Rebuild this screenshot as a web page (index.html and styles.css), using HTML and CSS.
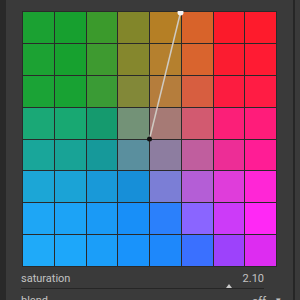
FILE: index.html
```html
<!DOCTYPE html>
<html>
<head>
<meta charset="utf-8">
<link rel="stylesheet" href="styles.css">
</head>
<body>
<div class="edge"></div>
<div class="panel">
  <div class="area">
    <div class="grid">
      <div style="background:#1ba132"></div><div style="background:#17a02f"></div><div style="background:#3b9a2c"></div><div style="background:#82862a"></div><div style="background:#b57f25"></div><div style="background:#d8632a"></div><div style="background:#fb1a2a"></div><div style="background:#fe1b2c"></div>
      <div style="background:#1ca233"></div><div style="background:#17a12f"></div><div style="background:#3e9a30"></div><div style="background:#85872d"></div><div style="background:#b5802e"></div><div style="background:#d9642e"></div><div style="background:#fb1c30"></div><div style="background:#ff1b33"></div>
      <div style="background:#1ba336"></div><div style="background:#18a233"></div><div style="background:#3a9b35"></div><div style="background:#828838"></div><div style="background:#b57d3c"></div><div style="background:#d75e40"></div><div style="background:#fc1c40"></div><div style="background:#ff1c44"></div>
      <div style="background:#1aa876"></div><div style="background:#18a872"></div><div style="background:#159a6e"></div><div style="background:#739277"></div><div style="background:#a67a75"></div><div style="background:#d25a70"></div><div style="background:#fb1f78"></div><div style="background:#ff1c7a"></div>
      <div style="background:#19a69a"></div><div style="background:#18a396"></div><div style="background:#16999a"></div><div style="background:#5a8f9e"></div><div style="background:#8d7da0"></div><div style="background:#c05e9e"></div><div style="background:#ed2d96"></div><div style="background:#ff1d95"></div>
      <div style="background:#1ca6d6"></div><div style="background:#1ba3d6"></div><div style="background:#1999d8"></div><div style="background:#178fd8"></div><div style="background:#7b7ed6"></div><div style="background:#b45ed6"></div><div style="background:#df3dda"></div><div style="background:#ff26d6"></div>
      <div style="background:#1ea6f5"></div><div style="background:#1ca3f6"></div><div style="background:#1a9af6"></div><div style="background:#188ff8"></div><div style="background:#2b80fb"></div><div style="background:#8a65ff"></div><div style="background:#cc3bf8"></div><div style="background:#ff28f5"></div>
      <div style="background:#1faaf9"></div><div style="background:#1da7fa"></div><div style="background:#1b9ef9"></div><div style="background:#1993fb"></div><div style="background:#1e88fb"></div><div style="background:#3a70ff"></div><div style="background:#9d42fb"></div><div style="background:#dd2cf1"></div>
    </div>
    <svg class="overlay" width="257" height="256" viewBox="0 0 257 256">
      <line x1="158.5" y1="1.5" x2="127.5" y2="128" stroke="#cfcac2" stroke-width="1.5"/>
      <circle cx="158.5" cy="1.5" r="3" fill="#f2f2f2"/>
      <circle cx="127.5" cy="128" r="2.5" fill="#111"/>
    </svg>
  </div>
  <div class="slider">
    <div class="row">
      <span>saturation</span><span>2.10</span>
    </div>
    <div class="track"><div class="marker"></div></div>
  </div>
  <div class="combo">
    <span>blend</span><span class="val">off<span class="arrow">▾</span></span>
  </div>
</div>
<div class="scroll"></div>
</body>
</html>
```

FILE: styles.css
```css
html, body {
  margin: 0;
  padding: 0;
  width: 300px;
  height: 300px;
  overflow: hidden;
  background: #3a3a3a;
  font-family: "Roboto", "Liberation Sans", sans-serif;
  font-size: 11px;
  color: #c2c2c2;
}
body {
  display: flex;
}
.edge {
  width: 6px;
  flex: none;
  background: #292929;
}
.panel {
  width: 287px;
  flex: none;
  padding: 11px 0 0 15px;
  box-sizing: border-box;
  display: flex;
  flex-direction: column;
}
.scroll {
  width: 2px;
  flex: none;
  background: #262626;
}
.area {
  position: relative;
  width: 255px;
  height: 256px;
  margin-left: 1px;
}
.grid {
  width: 255px;
  height: 256px;
  box-sizing: border-box;
  border: 1px solid #2a2a2a;
  background: #2a2a2a;
  display: grid;
  grid-template-columns: repeat(8, 1fr);
  grid-template-rows: repeat(8, 1fr);
  gap: 1px;
}
.overlay {
  position: absolute;
  left: 0;
  top: 0;
}
.slider {
  width: 243px;
  margin-top: 5px;
}
.row {
  display: flex;
  justify-content: space-between;
  line-height: 13px;
}
.track {
  position: relative;
  height: 1px;
  margin-top: 3px;
  background: #262626;
}
.marker {
  position: absolute;
  left: 205px;
  top: -4px;
  width: 0;
  height: 0;
  border-left: 3px solid transparent;
  border-right: 3px solid transparent;
  border-bottom: 4px solid #c8c8c8;
}
.combo {
  width: 260px;
  display: flex;
  justify-content: space-between;
  margin-top: 5px;
  line-height: 13px;
}
.arrow {
  font-size: 9px;
  margin-left: 10px;
  vertical-align: 2px;
}
```
